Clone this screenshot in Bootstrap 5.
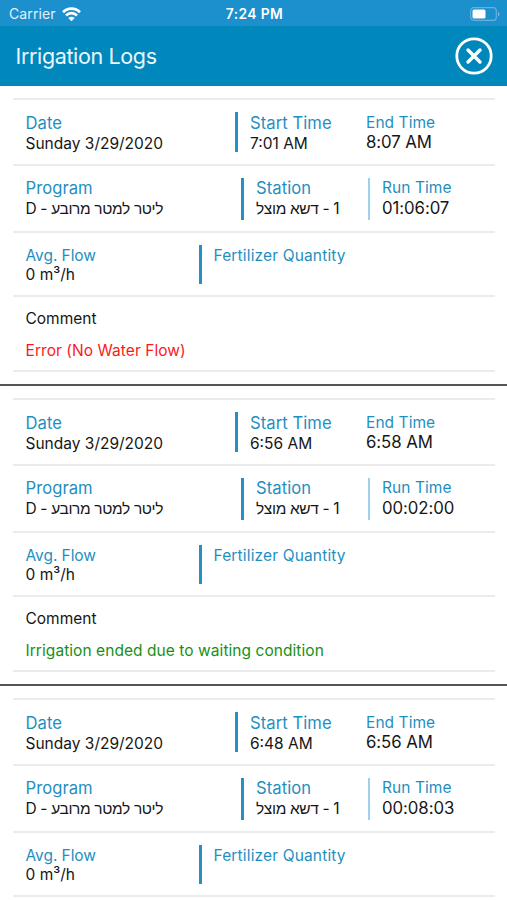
<!DOCTYPE html>
<html lang="en">
<head>
<meta charset="utf-8">
<meta name="viewport" content="width=device-width, initial-scale=1">
<title>Irrigation Logs</title>
<link href="https://cdn.jsdelivr.net/npm/bootstrap@5.3.0/dist/css/bootstrap.min.css" rel="stylesheet">
<style>
  body { font-family: Inter, "Open Sans", "Liberation Sans", sans-serif; color: #161616; background: #fff; height: 900px; overflow: hidden; }
  .status-bar { height: 26px; background: #1c8fcd; color: #fff; font-size: 14px; line-height: 26px; }
  .status-bar .carrier { color: #e2f1fa; letter-spacing: .1px; margin-left: 1px; }
  .status-bar .clock { font-size: 13.8px; letter-spacing: .4px; font-weight: 600; line-height: 28px; margin-right: 6px; }
  .wifi { margin-left: 6px; }
  .battery { margin-right: 7px; }
  .title-bar { height: 60px; background: #0087bc; color: #eaf7fc; padding: 0 14px 0 15.5px; }
  .title-bar h1 { font-size: 21.5px; letter-spacing: -.36px; line-height: 28px; font-weight: 400; }
  .log-entry { height: 299.8px; padding: 12px 12px 0 13px; border-bottom: 2px solid #555; }
  .log-entry:last-child { height: auto; border-bottom: 0; }
  .log-line { border-top: 2px solid #ebebeb; padding-left: 12.5px; }
  .line-date { height: 66px; }
  .line-program { height: 67px; }
  .line-flow { height: 64px; }
  .line-comment { height: 77px; border-bottom: 2px solid #ebebeb; }
  .line-end { height: 2px; }
  .field-label { color: #1f8fc0; font-size: 16.6px; line-height: 22px; letter-spacing: .06px; white-space: nowrap; }
  .field-value { font-size: 15.5px; line-height: 19px; white-space: nowrap; }
  .line-program .field-label { line-height: 20px; }
  .line-program .field-value { line-height: 21px; }
  .field-label.l-end { font-size: 15.5px; line-height: 22px; }
  .line-program .field-label.l-end { line-height: 20px; }
  .field-label.l-flow { font-size: 15.5px; line-height: 21px; letter-spacing: -.06px; }
  .field-label.l-quantity { letter-spacing: .15px; }
  .field-value.flow { line-height: 18px; }
  .field-value.big { font-size: 16.8px; line-height: 16px; letter-spacing: -.07px; }
  .line-program .field-value.big { line-height: 20px; }
  .bar { border-left: 3px solid #258fc6; }
  .bar-thin { border-left: 2px solid #9fd0ee; }
  .line-date .cell { height: 40px; margin-top: 12px; }
  .line-program .cell { height: 42px; margin-top: 12px; }
  .line-flow .cell { height: 39px; margin-top: 12px; }
  .w-date { width: 209.5px; }
  .w-start { width: 131px; padding-left: 12px; }
  .w-program { width: 215.5px; }
  .w-station { width: 127px; padding-left: 12px; }
  .w-runtime { padding-left: 12px; }
  .w-flow { width: 173px; }
  .w-fert { padding-left: 12px; }
  .he { font-family: Inter, "Liberation Sans", sans-serif; letter-spacing: -.35px; }
  .note { font-size: 15.5px; line-height: 20px; }
  .note-text { margin-top: 12px; letter-spacing: .06px; }
  .note-error { color: #fb1a1a; }
  .note-ok { color: #169016; }
</style>
<script src="https://cdn.jsdelivr.net/npm/bootstrap@5.3.0/dist/js/bootstrap.bundle.min.js"></script>
</head>
<body>
<header>
  <div class="status-bar row g-0">
    <div class="col d-flex align-items-center ps-2"><span class="carrier">Carrier</span>
      <svg class="wifi" width="19" height="15" viewBox="0 0 19 15" fill="none" stroke="#fff" stroke-width="2.7"><path d="M1 5.2a12 12 0 0 1 17 0M4 8.5a7.7 7.7 0 0 1 11 0"/><path d="M6.3 11.1a4.5 4.5 0 0 1 6.4 0L9.5 14.3z" fill="#fff" stroke="none"/></svg>
    </div>
    <div class="col-auto clock">7:24 PM</div>
    <div class="col d-flex align-items-center justify-content-end">
      <svg class="battery" width="30" height="14" viewBox="0 0 30 14"><rect x=".7" y=".7" width="25.6" height="12.6" rx="3" fill="none" stroke="#64b2de" stroke-width="1.2"/><rect x="2.5" y="2.5" width="13" height="9" rx="1.6" fill="#fff"/><path d="M28 4.7q3 2.3 0 4.6z" fill="#79bde3"/></svg>
    </div>
  </div>
  <div class="title-bar d-flex align-items-center justify-content-between">
    <h1 class="m-0">Irrigation Logs</h1>
    <svg class="close-icon" width="38" height="38" viewBox="0 0 38 38" fill="none" stroke="#fff" role="button" aria-label="Close"><circle cx="19" cy="19" r="17.2" stroke-width="2.8"/><path d="M13 13l12 12M25 13L13 25" stroke-width="3.4" stroke-linecap="round"/></svg>
  </div>
</header>
<main id="logs"></main>
<script>
  const logs = [
    { start: "7:01 AM", end: "8:07 AM", run: "01:06:07", note: "Error (No Water Flow)", tone: "note-error" },
    { start: "6:56 AM", end: "6:58 AM", run: "00:02:00", note: "Irrigation ended due to waiting condition", tone: "note-ok" },
    { start: "6:48 AM", end: "6:56 AM", run: "00:08:03" }
  ];
  const comment = l => l.note ? `
    <div class="log-line line-comment">
      <div class="note pt-2 mt-1">Comment</div>
      <div class="note note-text ${l.tone}">${l.note}</div>
    </div>` : `<div class="log-line line-end"></div>`;
  document.getElementById("logs").innerHTML = logs.map(l => `
  <section class="log-entry">
    <div class="log-line line-date d-flex">
      <div class="cell w-date"><div class="field-label">Date</div><div class="field-value">Sunday 3/29/2020</div></div>
      <div class="cell bar w-start"><div class="field-label">Start Time</div><div class="field-value">${l.start}</div></div>
      <div class="cell"><div class="field-label l-end">End Time</div><div class="field-value big">${l.end}</div></div>
    </div>
    <div class="log-line line-program d-flex">
      <div class="cell w-program"><div class="field-label">Program</div><div class="field-value he">D - ליטר למטר מרובע</div></div>
      <div class="cell bar w-station"><div class="field-label">Station</div><div class="field-value he"><bdi dir="rtl">1 - דשא מוצל</bdi></div></div>
      <div class="cell bar-thin w-runtime"><div class="field-label l-end">Run Time</div><div class="field-value big">${l.run}</div></div>
    </div>
    <div class="log-line line-flow d-flex">
      <div class="cell w-flow"><div class="field-label l-flow">Avg. Flow</div><div class="field-value flow">0 m³/h</div></div>
      <div class="cell bar w-fert"><div class="field-label l-flow l-quantity">Fertilizer Quantity</div></div>
    </div>
    ${comment(l)}
  </section>`).join("");
</script>
</body>
</html>
